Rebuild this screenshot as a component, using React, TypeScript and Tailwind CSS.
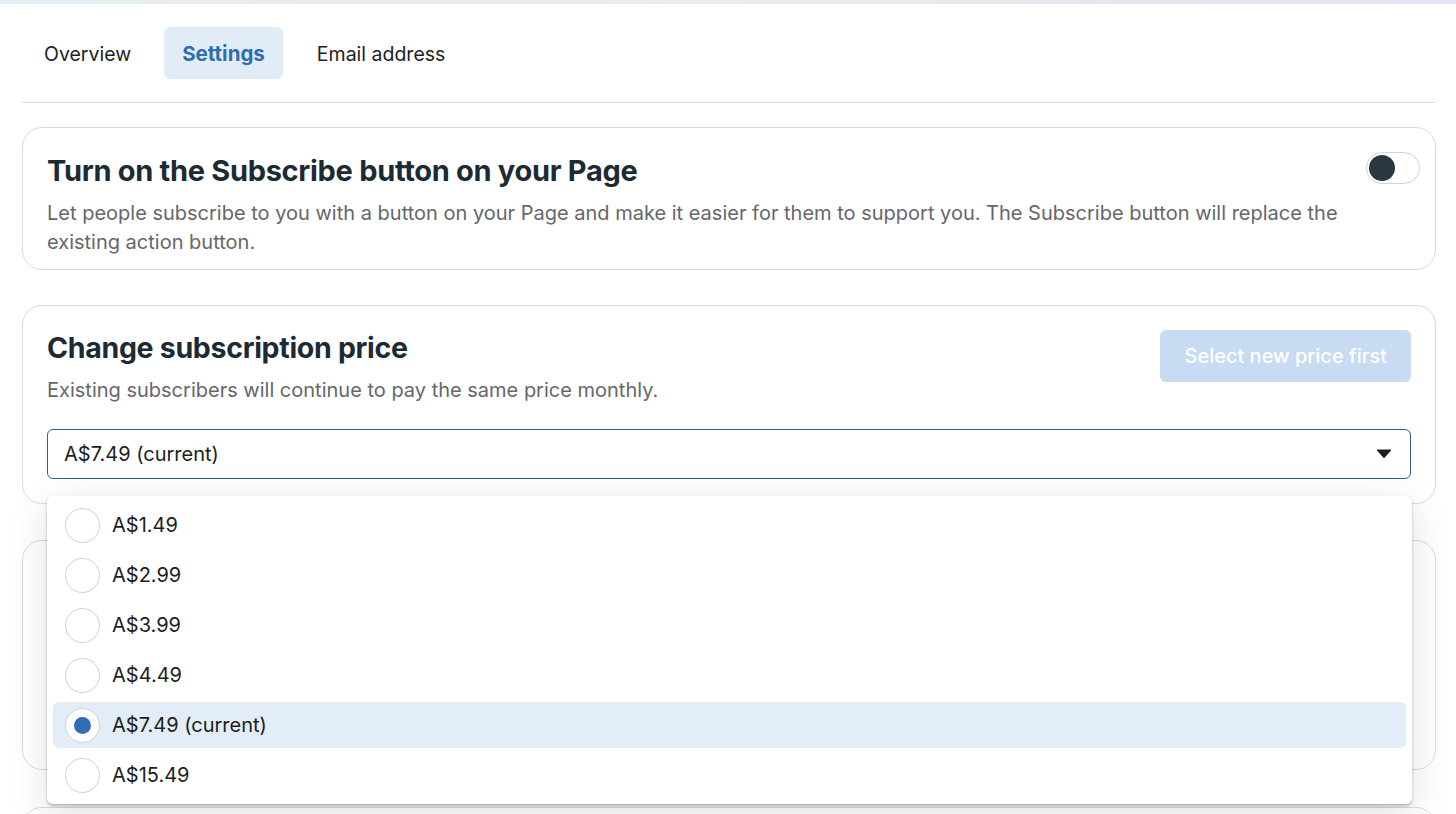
import { useState } from 'react';

const prices = ['A$1.49', 'A$2.99', 'A$3.99', 'A$4.49', 'A$7.49 (current)', 'A$15.49'];

function Radio({ checked }: { checked: boolean }) {
  return (
    <span className="w-[35px] h-[35px] rounded-full border border-[#ced0d4] bg-white flex items-center justify-center shrink-0">
      {checked && <span className="w-[17px] h-[17px] rounded-full bg-[#2f6db5]" />}
    </span>
  );
}

export default function App() {
  const [selected] = useState('A$7.49 (current)');

  return (
    <div className="bg-white font-['Inter',sans-serif] text-[#1c1e21] overflow-hidden h-[814px]">
      <div className="h-[4px] bg-gradient-to-r from-[#e4edf3] via-[#e6ecef] to-[#e6e1f1]" />
      <div className="pl-[22px] pr-[20px]">
        <nav className="flex items-center gap-[11px] pt-[23px] pb-[23px] border-b border-[#dadde1]">
          <button className="px-[22px] h-[52px] pt-[3px] text-[19.5px] text-[#1c1e21] rounded-md">Overview</button>
          <button className="px-[18px] h-[52px] pt-[3px] text-[20.5px] font-bold text-[#2d6db0] bg-[#e2ecf6] rounded-md">Settings</button>
          <button className="px-[23px] h-[52px] pt-[3px] text-[19.5px] text-[#1c1e21] rounded-md">Email address</button>
        </nav>

        <section className="mt-[24px] border border-[#d9dbde] rounded-[20px] pl-[24px] pr-[15px] pt-[24px] pb-[12px] flex gap-6">
          <div className="flex-1">
            <h2 className="text-[29px] font-bold leading-[38px] tracking-[-0.3px] text-[#1c2b33]">Turn on the Subscribe button on your Page</h2>
            <p className="mt-[9px] text-[20px] leading-[29px] text-[#65676b]">
              Let people subscribe to you with a button on your Page and make it easier for them to support you. The Subscribe button will replace the existing action button.
            </p>
          </div>
          <div className="w-[54px] h-[32px] rounded-full border border-[#d2d4d8] bg-white flex items-center px-[2px] shrink-0">
            <span className="w-[26px] h-[26px] rounded-full bg-[#2b3640]" />
          </div>
        </section>

        <div className="relative">
          <section className="mt-[35px] border border-[#d9dbde] rounded-[20px] px-[24px] pt-[23px] pb-[24px]">
            <div className="flex items-start justify-between">
              <div>
                <h2 className="text-[28.5px] font-bold leading-[38px] tracking-[-0.3px] text-[#1c2b33]">Change subscription price</h2>
                <p className="mt-[9px] text-[20px] leading-[29px] text-[#65676b]">Existing subscribers will continue to pay the same price monthly.</p>
              </div>
              <button className="mt-[1px] h-[52px] px-[24px] rounded-md bg-[#c8dbf3] text-white text-[20px] font-medium">Select new price first</button>
            </div>
            <div className="mt-[24px] h-[50px] border-[1.5px] border-[#2d5f8f] rounded-md flex items-center justify-between pl-[16px] pr-[18px]">
              <span className="text-[20px]">{selected}</span>
              <svg width="16" height="10" viewBox="0 0 16 10"><path d="M1 1.5 Q0.5 0.5 1.8 0.5 H14.2 Q15.5 0.5 15 1.5 L8.8 8.6 Q8 9.5 7.2 8.6 Z" fill="#1c1e21" /></svg>
            </div>
          </section>

          <section className="mt-[36px] h-[230px] border border-[#d9dbde] rounded-[20px]" />
          <section className="mt-[37px] h-[60px] border border-[#d9dbde] rounded-[20px]" />

          <div className="absolute left-[25px] right-[24px] top-[191px] bg-white rounded-md shadow-[0_2px_3px_rgba(0,0,0,0.25),0_10px_40px_rgba(0,0,0,0.12)] px-[6px] py-[4px]">
            {prices.map((p) => {
              const on = p === selected;
              return (
                <div key={p} className="h-[50px] py-[2px]">
                  <div className={`h-full flex items-center gap-[12px] pl-[12px] rounded-md ${on ? 'bg-[#e3edf7]' : ''}`}>
                    <Radio checked={on} />
                    <span className="text-[20px] text-[#1c1e21]">{p}</span>
                  </div>
                </div>
              );
            })}
          </div>
        </div>
      </div>
    </div>
  );
}
